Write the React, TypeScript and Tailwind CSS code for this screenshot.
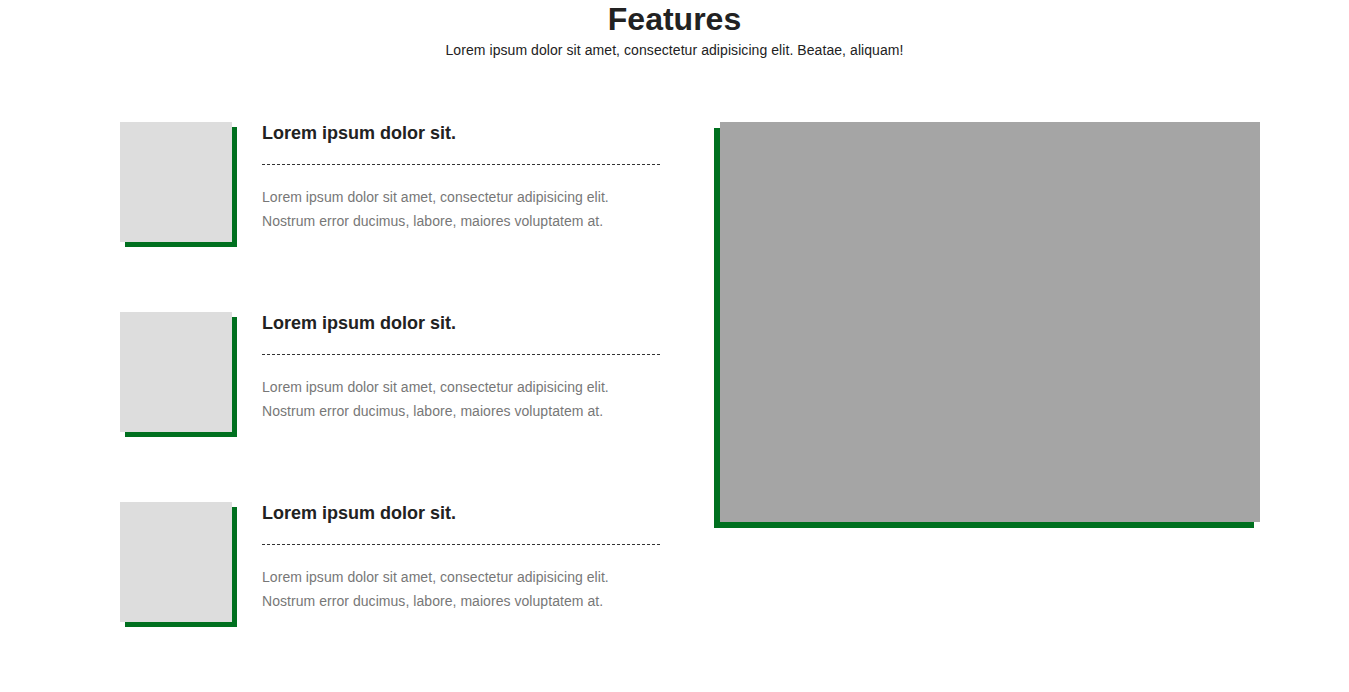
import React from "react";

const items = [0, 1, 2];

export default function App() {
  return (
    <div className="min-h-[692px] bg-white font-['Liberation_Sans',Arial,sans-serif]">
      <header className="text-center">
        <h1 className="text-[32px] leading-[38px] font-bold text-[#222]">Features</h1>
        <p className="mt-[2px] text-[14px] leading-[20px] tracking-[0.07px] text-[#222]">
          Lorem ipsum dolor sit amet, consectetur adipisicing elit. Beatae, aliquam!
        </p>
      </header>
      <div className="mt-[62px] ml-[120px] flex gap-[60px]">
        <div className="flex w-[540px] flex-col gap-[70px]">
          {items.map((i) => (
            <div key={i} className="flex">
              <div className="h-[120px] w-[112px] shrink-0 bg-[#dddddd] shadow-[5px_5px_0_#00701f]" />
              <div className="ml-[30px] w-[398px]">
                <h3 className="pt-px text-[18px] leading-[20px] font-bold text-[#222]">
                  Lorem ipsum dolor sit.
                </h3>
                <div className="mt-[21px] border-t border-dashed border-[#333]" />
                <p className="mt-[20px] text-[14px] leading-[24px] tracking-[0.05px] text-[#777]">
                  Lorem ipsum dolor sit amet, consectetur adipisicing elit.
                  <br />
                  Nostrum error ducimus, labore, maiores voluptatem at.
                </p>
              </div>
            </div>
          ))}
        </div>
        <div className="h-[400px] w-[540px] bg-[#a5a5a5] shadow-[-6px_6px_0_#00701f]" />
      </div>
    </div>
  );
}
